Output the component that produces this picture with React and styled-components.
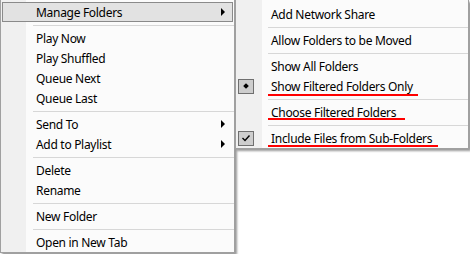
import React from 'react';
import styled, { createGlobalStyle } from 'styled-components';

const GlobalStyle = createGlobalStyle`
  html, body {
    margin: 0;
    padding: 0;
    background: #ffffff;
    overflow: hidden;
  }
  body {
    font-family: "Noto Sans", "Segoe UI", "Liberation Sans", sans-serif;
    font-size: 12px;
    letter-spacing: -0.3px;
    color: #000;
  }
`;

// Whole captured area
const Screen = styled.div`
  display: flex;
  align-items: flex-start;
  width: 470px;
  height: 254px;
  overflow: hidden;
  background: #ffffff;
`;

// Popup menu panel (gutter drawn as part of background)
const Menu = styled.div`
  flex: none;
  box-sizing: border-box;
  width: ${({ $width }) => $width}px;
  padding-top: ${({ $padTop }) => $padTop}px;
  border: 1px solid #a0a0a0;
  border-top: none;
  background: linear-gradient(
    to right,
    #f0f0f0 ${({ $gutter }) => $gutter}px,
    #fbfbfb ${({ $gutter }) => $gutter}px
  );
  box-shadow: 2px 2px 2px rgba(0, 0, 0, 0.4);
`;

const Item = styled.div`
  position: relative;
  box-sizing: border-box;
  height: 20px;
  margin: 0 1px;
  padding-right: 7px;
  display: grid;
  grid-template-columns: 33px 1fr auto;
  align-items: center;
  border: 1px solid ${({ $active }) => ($active ? '#8a8a8a' : 'transparent')};
  background: ${({ $active }) => ($active ? '#e2e2e2' : 'transparent')};
  white-space: nowrap;
  line-height: 16px;
`;

const Label = styled.span`
  padding-top: 1px;
`;

const IconCell = styled.span`
  display: flex;
  align-items: center;
`;

const MarkBox = styled.span`
  box-sizing: border-box;
  width: 16px;
  height: 15px;
  border: 1px solid #6f6f6f;
  background: #cdcdcd;
  display: flex;
  align-items: center;
  justify-content: center;
`;

const Bullet = styled.span`
  width: 4px;
  height: 4px;
  background: #000;
  transform: rotate(45deg);
`;

const Arrow = styled.span`
  width: 0;
  height: 0;
  border-left: 4px solid #000;
  border-top: 4px solid transparent;
  border-bottom: 4px solid transparent;
`;

const Separator = styled.div`
  height: 1px;
  margin: 3px 0 2px 32px;
  background: #d7d7d7;
`;

// Red hand-drawn annotation lines lying over the items
const Underline = styled.span`
  position: absolute;
  left: 30px;
  top: ${({ $top }) => $top}px;
  width: ${({ $w }) => $w}px;
  height: 2px;
  background: #ff0000;
`;

const Check = () => (
  <svg width="10" height="8" viewBox="0 0 10 8">
    <polyline points="1.5,4 4,6.5 8.5,1.5" fill="none" stroke="#000" strokeWidth="1.4" />
  </svg>
);

const MenuItem = ({ label, active, submenu, mark, underline }) => (
  <Item $active={active}>
    <IconCell>
      {mark === 'bullet' && (
        <MarkBox>
          <Bullet />
        </MarkBox>
      )}
      {mark === 'check' && (
        <MarkBox>
          <Check />
        </MarkBox>
      )}
    </IconCell>
    <Label>{label}</Label>
    {submenu ? <Arrow /> : <span />}
    {underline && <Underline $top={underline.top} $w={underline.width} />}
  </Item>
);

const mainItems = [
  { label: 'Manage Folders', active: true, submenu: true },
  '-',
  { label: 'Play Now' },
  { label: 'Play Shuffled' },
  { label: 'Queue Next' },
  { label: 'Queue Last' },
  '-',
  { label: 'Send To', submenu: true },
  { label: 'Add to Playlist', submenu: true },
  '-',
  { label: 'Delete' },
  { label: 'Rename' },
  '-',
  { label: 'New Folder' },
  '-',
  { label: 'Open in New Tab' },
];

const subItems = [
  { label: 'Add Network Share' },
  '-',
  { label: 'Allow Folders to be Moved' },
  '-',
  { label: 'Show All Folders' },
  { label: 'Show Filtered Folders Only', mark: 'bullet', underline: { top: 17, width: 150 } },
  '-',
  { label: 'Choose Filtered Folders', underline: { top: 15, width: 137 } },
  '-',
  { label: 'Include Files from Sub-Folders', mark: 'check', underline: { top: 16, width: 170 } },
];

const renderItems = (items) =>
  items.map((it, i) =>
    it === '-' ? <Separator key={i} /> : <MenuItem key={i} {...it} />
  );

export default function App() {
  return (
    <>
      <GlobalStyle />
      <Screen>
        <Menu $width={235} $gutter={25} $padTop={2}>
          {renderItems(mainItems)}
        </Menu>
        <Menu $width={234} $gutter={26} $padTop={4}>
          {renderItems(subItems)}
        </Menu>
      </Screen>
    </>
  );
}
